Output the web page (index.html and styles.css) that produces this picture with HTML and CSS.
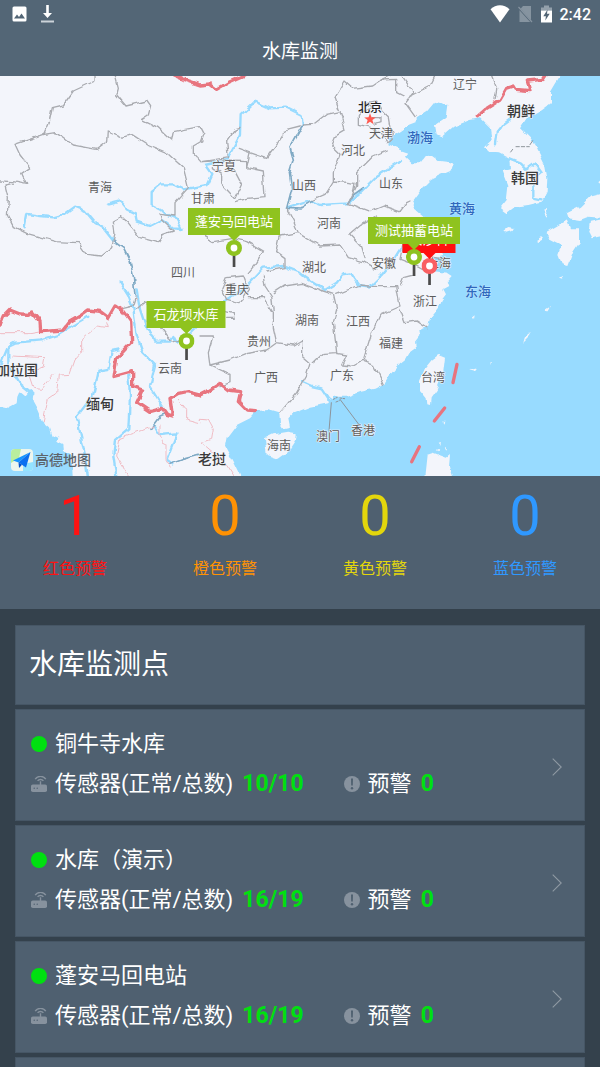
FILE: index.html
```html
<!DOCTYPE html>
<html lang="zh-CN">
<head>
    <meta charset="UTF-8">
    <meta name="viewport" content="width=device-width, initial-scale=1.0">
    <title>水库监测</title>
    <link rel="stylesheet" href="styles.css">
</head>
<body>
    <!-- shared icons -->
    <svg class="icon-defs" width="0" height="0" aria-hidden="true">
        <symbol id="icon-sensor" viewBox="0 0 16 16">
            <rect x="0" y="8.5" width="16" height="7.5" rx="1.8" fill="currentColor"/>
            <path d="M9.5 9V5.2M6.6 4.9a3.6 3.6 0 0 1 5.8 0M4.2 3.2a6.4 6.4 0 0 1 10.6 0" fill="none" stroke="currentColor" stroke-width="1.4"/>
            <circle cx="3.2" cy="12.2" r="0.7" fill="#4f6070"/>
            <circle cx="6.2" cy="12.2" r="0.7" fill="#4f6070"/>
        </symbol>
        <symbol id="icon-warn" viewBox="0 0 16 16">
            <circle cx="8" cy="8" r="8" fill="currentColor"/>
            <path d="M7 2.5h2L8.8 9.6H7.2z" fill="#4f6070"/>
            <circle cx="8" cy="12.2" r="1.2" fill="#4f6070"/>
        </symbol>
        <symbol id="icon-arrow" viewBox="0 0 10 18">
            <path d="M0.7 0.7 9.2 9 0.7 17.3" fill="none" stroke="currentColor" stroke-width="1.1"/>
        </symbol>
        <symbol id="icon-pin" viewBox="0 0 16 28">
            <rect x="6.7" y="15" width="2.7" height="12" fill="#4a4a4a"/>
            <circle cx="8" cy="8" r="8" fill="currentColor"/>
            <circle cx="8" cy="8" r="3.4" fill="#fff"/>
        </symbol>
    </svg>

    <div class="page">
        <div class="status-bar">
            <div class="status-left">
                <svg width="15" height="16" viewBox="0 0 15 16"><rect x="0.5" y="0.5" width="14" height="15" rx="1.5" fill="#fff"/><path d="M2 12.5 5 8.5 7 11 9.5 7.5 13 12.5z" fill="#536676"/></svg>
                <svg width="13" height="18" viewBox="0 0 13 18"><path d="M5.2 0h2.6v8H11l-4.5 5L2 8h3.2z" fill="#fff"/><path d="M0 15.5h13v2H0z" fill="#ccd3d9"/></svg>
            </div>
            <div class="status-right">
                <svg width="20" height="18" viewBox="0 0 20 18"><path d="M0.5 4.3C6-1 14-1 19.5 4.3L10 17.5z" fill="#fff"/></svg>
                <svg width="15" height="18" viewBox="0 0 15 18"><path d="M5 1h8v14.2L2.6 3.8zM1.5 5.2 12.2 17H1.5z" fill="#8694a0"/><path d="M0.5 2 14 17" stroke="#8694a0" stroke-width="1.2"/></svg>
                <svg width="11" height="18" viewBox="0 0 11 18"><path d="M3 0.5h5v2h3v3H0v-3h3z" fill="#93a0ab"/><path d="M0 5.5h11V17.5H0z" fill="#fff"/><path d="M6.6 4.5 2.3 11.3h2.6l-.6 4.3 4.4-6.8H6z" fill="#536676"/></svg>
                <span class="clock">2:42</span>
            </div>
        </div>

        <header class="header">
            <h1>水库监测</h1>
        </header>

        <section class="map" aria-label="地图">
            <svg class="map-canvas" viewBox="0 0 600 400" preserveAspectRatio="xMidYMid slice">
                <defs>
                    <filter id="rough" filterUnits="userSpaceOnUse" x="-20" y="-20" width="1840" height="1240">
                        <feTurbulence type="fractalNoise" baseFrequency="0.045" numOctaves="1" seed="4"/>
                        <feDisplacementMap in="SourceGraphic" scale="18" xChannelSelector="R" yChannelSelector="G"/>
                    </filter>
                </defs>

                <!-- geography is drawn at three units per pixel -->
                <g transform="scale(0.33333)">
                    <g filter="url(#rough)">
                        <!-- sea -->
                        <g class="sea">
                            <path d="M1690-20 1650 47 1650 82 1615 107 1580 127 1560 157 1590 187 1610 217 1635 267 1642 307 1640 347 1625 377 1585 387 1545 392 1520 412 1500 397 1520 372 1525 327 1508 282 1530 277 1528 247 1500 232 1470 230 1452 214 1475 192 1470 157 1440 127 1410 132 1360 152 1325 182 1310 175 1305 147 1340 122 1345 87 1305 77 1280 107 1250 127 1250 137 1225 147 1200 165 1165 187 1162 205 1200 222 1225 230 1215 242 1235 262 1260 262 1275 242 1295 237 1320 255 1362 260 1355 282 1320 297 1290 312 1275 327 1260 342 1238 372 1245 387 1240 397 1270 422 1290 467 1330 540 1300 548 1315 560 1310 574 1270 582 1340 590 1355 600 1340 617 1348 630 1330 640 1338 655 1325 672 1318 690 1305 707 1290 725 1285 752 1255 762 1258 780 1245 797 1248 815 1225 832 1215 850 1200 862 1170 897 1155 922 1130 937 1080 947 1040 962 1000 962 985 982 930 992 880 1012 865 1027 870 1052 850 1057 840 1042 838 1012 805 1002 770 1005 750 1027 710 1047 680 1087 675 1112 700 1157 740 1240 1850 1240 1850-20z"/>
                            <path d="M-20 995 0 990 25 995 50 982 52 965 60 947 75 960 88 945 100 957 98 975 110 997 127 1037 150 1057 158 1080 175 1085 172 1098 190 1107 192 1125 215 1137 220 1240-20 1240z"/>
                        </g>
                        <!-- islands -->
                        <g class="land">
                            <path d="M1640 467 1675 447 1700 432 1710 457 1740 457 1740 497 1720 527 1705 567 1685 562 1675 537 1685 507 1665 497 1645 487z"/>
                            <path d="M1700 412 1740 392 1770 362 1820 350 1820 427 1765 422 1740 432 1705 427z"/>
                            <path d="M1770 437 1820 427 1820 477 1775 487 1765 467z"/>
                            <path d="M1510 462 1525 453 1540 456 1535 465 1518 470z"/>
                            <path d="M1632 415 1640 397 1642 407 1637 422z"/>
                            <path d="M1608 492 1625 482 1632 488 1615 498z"/>
                            <path d="M1315 837 1335 845 1330 887 1310 942 1292 967 1290 987 1282 985 1280 967 1260 942 1260 912 1275 877 1295 852z"/>
                            <path d="M1280 1137 1300 1130 1340 1145 1350 1137 1347 1172 1365 1230 1270 1230z"/>
                            <path d="M795 1087 820 1075 865 1067 890 1072 888 1092 865 1127 835 1149 800 1137z"/>
                            <path d="M1570 800 1574 785 1595 768 1590 780z"/>
                            <path d="M1630 705 1650 692 1643 706z"/>
                            <path d="M1418 722 1424 718 1422 730z"/>
                            <path d="M1680 605 1688 600 1690 608z"/>
                            <path d="M1795 322 1802 315 1802 328z"/>
                            <path d="M1408 880 1432 874 1424 884z"/>
                            <path d="M1470 860 1476 858 1474 866z"/>
                            <path d="M1330 1040 1336 1036 1334 1046zM1313 1100 1320 1098 1318 1106zM1310 1122 1318 1118 1316 1126zM1332 1118 1338 1112 1337 1124z"/>
                        </g>

                        <!-- rivers -->
                        <g class="river">
                            <path d="M74 457 82 414 122 420 160 424 195 414 225 392 255 404 285 440 310 457 340 495"/>
                            <path d="M325 382 358 374 380 400 405 412 410 437 450 450 485 432 520 457 545 459 530 427 495 412 485 402 455 387 455 345 480 325 520 325 550 340 580 335 620 327 635 295 615 267 680 252 700 217 720 177 722 117 765 77 810 97 860 95 905 117 908 147"/>
                            <path d="M860 397 930 375 960 387 1045 382 1090 340 1130 300 1200 255"/>
                            <path d="M0 870 25 810 45 800 125 793 175 777 215 752 265 722"/>
                            <path d="M25 810 25 865 60 925 100 957" />
                            <path d="M362 620 385 657 400 697 410 777 430 832 465 867 450 932 490 997"/>
                            <path d="M410 640 420 700 440 760 460 780 465 797 510 797 520 780 530 800 560 780 600 740 680 670 730 640 770 597 790 575 850 570 900 590 920 607 975 642 1010 620 1030 595 1050 592 1075 627 1110 632 1145 597 1175 560 1200 520"/>
                            <path d="M357 820 335 825 325 882 295 887 280 957 230 1022 245 1092 255 1140 265 1210"/>
                            <path d="M385 900 390 957 385 1057 345 1092 340 1140 350 1210"/>
                            <path d="M460 1047 480 1077 530 1072 500 1150 520 1165"/>
                            <path d="M905 917 935 930 965 937 985 967 1000 977"/>
                            <path d="M1485 202 1490 170 1510 145 1530 130"/>
                            <path d="M1528 247 1560 260 1580 280 1605 262 1625 290 1600 310 1600 365 1625 370"/>
                        </g>
                        <g class="river-border">
                            <path d="M340 495 370 517 390 557 400 600 405 660"/>
                            <path d="M908 147 870 215 880 250 868 290 875 340 860 397 900 399 935 377"/>
                            <path d="M1045 382 1060 357 1090 335"/>
                            <path d="M450 1060 480 1020 500 1012M510 1165 550 1150 600 1137"/>
                        </g>

                        <!-- province borders -->
                        <g class="province">
                            <path d="M285-20 285 15 220 45 190 87 157 95 148 137 132 175 45 205 60 237 90 275 65 292 80 325 40 317 0 315"/>
                            <path d="M132 175 165 170 190 185 220 207 290 220 320 197 322 167 365 185 395 175 445 207 500 230 550 275 565 335 525 380 525 420 480 415 485 432 520 465 490 475 475 500 420 485 385 440 365 422 340 435 345 475 335 515 305 540 260 535 235 500 170 497 80 472 40 452 22 417 25 367 15 327 40 322"/>
                            <path d="M340-20 355 37 350 57 378 90 440 75 452 92 445 117 425 130 475 155 515 192 520 167 600 152 612 175 605 195 580 210 580 230 605 257 640 255"/>
                            <path d="M605 257 685 245 680 197 705 162 720 157M715 217 750 230 800 247 830 207 860 160 900 150"/>
                            <path d="M750 230 740 275 790 285 795 362 740 367 705 377M685 255 740 257 740 277M640 275 665 292 665 325 705 367 725 325 705 287 670 252"/>
                            <path d="M908 147 940 145 980 115 1020 107 1005 65 1035 15 1060 37 1115 30 1145 10 1190 -10"/>
                            <path d="M1020 107 1035 160 1010 175 995 210 1020 235 1000 290 1000 315 975 355 930 375M1000 315 1065 322 1060 350"/>
                            <path d="M1075 122 1085 105 1120 95 1100 80 1130 75 1145 105 1165 125 1170 155 1180 187 1160 197 1140 170 1115 155 1075 145zM1120 125 1140 125 1140 140 1125 145"/>
                            <path d="M1162 222 1120 240 1070 290 1070 330 1045 382 1110 407 1150 390 1200 407M1140 12 1190 10 1190 50 1210 60M1200-10 1240 50 1215 80 1245 122M1230 60 1290 30 1310-10M1470-10 1490 40 1485 70"/>
                            <path d="M860 397 880 435 895 470 960 510 1020 507 1045 545 1090 557 1130 580M1200 407 1220 380 1230 375M1130 420 1100 437 1085 445 1050 475 1085 512 1095 545"/>
                            <path d="M895 470 840 480 830 527 855 545 855 575 800 585M600 472 640 497 700 487 740 497 790 527 770 560 745 590"/>
                            <path d="M410 660 400 690 370 697M410 700 430 680 450 690 480 750 520 800 560 790M600 780 640 780 625 830 630 867 690 895 690 920 660 932"/>
                            <path d="M630 867 690 852 740 832 800 822 830 800M665 640 680 605 730 600 745 640 720 680 680 670zM745 665 790 665 815 705M790 600 795 630 815 660 820 705 820 755 830 800 880 807 905 792 905 840 930 862 920 897 890 950 840 1010"/>
                            <path d="M665 700 700 710 700 727 680 727M820 650 850 630 905 622 960 642 1000 655 1010 700 1000 740 1010 830 970 832 940 860"/>
                            <path d="M1010 655 1080 627 1130 632 1190 632 1200 690 1140 717 1115 770 1090 852 1060 870 1025 867 1040 837 1010 832M1090 857 1125 870 1150 925M1200 700 1215 740 1250 735 1280 755M1200 630 1210 605 1240 597"/>
                            <path d="M1210 500 1200 550 1240 565 1270 582M1285 540 1330 550 1345 565"/>
                        </g>

                        <!-- borders of neighbouring countries -->
                        <g class="neighbour">
                            <path d="M0 770 90 770 130 763M35 840 135 845 130 872 85 892 100 937 125 940 160 897M320 740 325 755 290 750 245 787 245 830 225 852 210 895 175 897 170 950 145 967 135 1012 130 1037"/>
                            <path d="M460 1050 360 1087 350 1140 385 1200M480 1050 480 1080 495 1110 495 1150 510 1175M535 970 560 1000 560 1030 600 1040M600 1030 625 1032 640 1060 635 1090 605 1100 640 1130 680 1165 710 1210"/>
                        </g>

                        <!-- national border -->
                        <g class="national">
                            <path d="M-10 755 0 747 10 722 30 702 60 714 85 715 97 710 120 737 122 767 190 762 210 737 240 720 265 702 300 706 325 725 345 690 370 707 392 737 395 800 350 847 342 902 398 887 398 932 428 942 410 980 450 1007 487 997 500 1015 517 1020 510 967 535 952 560 947 600 957 630 942 660 922 685 942 722 947 715 977 740 1002 770 1004"/>
                            <path d="M520-3 550 10 600 27 630 24 650 40 690 17 740-5"/>
                            <path d="M1432 122 1460 97 1500 72 1520 37 1542 30 1548 40 1590 44 1582 15 1630 10 1640-5"/>
                        </g>
                    </g>

                    <path class="national" d="M1371 865 1359 920M1334 996 1303 1035M1258 1112 1235 1157"/>
                    <path class="leader" d="M994 980 987 1065M1020 970 1080 1050M1548 212h10m6 0h10m6 0h8M1532 228l6-8M1590 206l8-12"/>
                    <path class="leader" d="M1000 970l12-6m8 2l14 2m-26 10l10-4" stroke-dasharray="6 4"/>
                </g>

                <g class="place">
                    <text x="100" y="116">青海</text>
                    <text x="203" y="127">甘肃</text>
                    <text x="224" y="95">宁夏</text>
                    <text x="183" y="201">四川</text>
                    <text x="381" y="62">天津</text>
                    <text x="353" y="79">河北</text>
                    <text x="304" y="114">山西</text>
                    <text x="391" y="112">山东</text>
                    <text x="329" y="152">河南</text>
                    <text x="314" y="196">湖北</text>
                    <text x="384" y="192">安徽</text>
                    <text x="439" y="192">上海</text>
                    <text x="237" y="218">重庆</text>
                    <text x="307" y="249">湖南</text>
                    <text x="358" y="250">江西</text>
                    <text x="425" y="230">浙江</text>
                    <text x="391" y="272">福建</text>
                    <text x="259" y="270">贵州</text>
                    <text x="266" y="306">广西</text>
                    <text x="342" y="304">广东</text>
                    <text x="170" y="297">云南</text>
                    <text x="433" y="306">台湾</text>
                    <text x="328" y="365">澳门</text>
                    <text x="363" y="359">香港</text>
                    <text x="279" y="374">海南</text>
                    <text x="465" y="13">辽宁</text>
                    <text class="capital" x="370" y="36">北京</text>
                </g>
                <g class="place country">
                    <text x="521" y="40">朝鲜</text>
                    <text x="525" y="107">韩国</text>
                    <text x="100" y="333">缅甸</text>
                    <text x="212" y="388">老挝</text>
                    <text x="10" y="299">孟加拉国</text>
                </g>
                <g class="place ocean">
                    <text x="420" y="66">渤海</text>
                    <text x="462" y="137">黄海</text>
                    <text x="478" y="220">东海</text>
                </g>
                <path d="M370 37.2l1.5 4.1 4.3.1-3.4 2.7 1.2 4.2-3.6-2.5-3.6 2.5 1.2-4.2-3.4-2.7 4.3-.1z" fill="#ff5a50"/>
            </svg>

            <button class="marker marker-pengan" type="button">
                <span class="marker-label">蓬安马回电站</span>
                <svg class="marker-pin" width="16" height="28"><use href="#icon-pin"/></svg>
            </button>
            <button class="marker marker-shilong" type="button">
                <span class="marker-label">石龙坝水库</span>
                <svg class="marker-pin" width="16" height="28"><use href="#icon-pin"/></svg>
            </button>
            <button class="marker marker-red" type="button">
                <span class="marker-label">长沙科</span>
                <svg class="marker-pin" width="16" height="28"><use href="#icon-pin"/></svg>
            </button>
            <button class="marker marker-test" type="button">
                <span class="marker-label">测试抽蓄电站</span>
                <svg class="marker-pin" width="16" height="28"><use href="#icon-pin"/></svg>
            </button>

            <div class="map-logo">
                <svg width="22" height="22" viewBox="0 0 22 22">
                    <rect width="22" height="22" rx="4" fill="#eef6ee"/>
                    <path d="M4 0h6L8 9 0 14V4a4 4 0 0 1 4-4z" fill="#b9ee9e"/>
                    <path d="M12 15l10-2v5a4 4 0 0 1-4 4h-6z" fill="#93e3ff"/>
                    <path d="M19.5 3 2 11.5l5.5 2z" fill="#1795ff"/>
                    <path d="M19.5 3 7.5 13.5 15 18.5z" fill="#0a6ff0"/>
                    <path d="M7.5 13.5 8 19l3-3.2z" fill="#0753c9"/>
                </svg>
                <span>高德地图</span>
            </div>
        </section>

        <section class="alerts">
            <div class="alert alert-red">
                <strong>1</strong>
                <span>红色预警</span>
            </div>
            <div class="alert alert-orange">
                <strong>0</strong>
                <span>橙色预警</span>
            </div>
            <div class="alert alert-yellow">
                <strong>0</strong>
                <span>黄色预警</span>
            </div>
            <div class="alert alert-blue">
                <strong>0</strong>
                <span>蓝色预警</span>
            </div>
        </section>

        <main class="stations">
            <h2 class="stations-title">水库监测点</h2>

            <a class="station" href="#tongniusi">
                <div class="station-info">
                    <div class="station-line"><i class="dot"></i>铜牛寺水库</div>
                    <div class="station-line">
                        <svg class="icon" width="16" height="16"><use href="#icon-sensor"/></svg>传感器(正常/总数)<b>10/10</b>
                        <svg class="icon icon-gap" width="16" height="16"><use href="#icon-warn"/></svg>预警<b>0</b>
                    </div>
                </div>
                <svg class="arrow" width="10" height="18"><use href="#icon-arrow"/></svg>
            </a>

            <a class="station" href="#yanshi">
                <div class="station-info">
                    <div class="station-line"><i class="dot"></i>水库（演示）</div>
                    <div class="station-line">
                        <svg class="icon" width="16" height="16"><use href="#icon-sensor"/></svg>传感器(正常/总数)<b>16/19</b>
                        <svg class="icon icon-gap" width="16" height="16"><use href="#icon-warn"/></svg>预警<b>0</b>
                    </div>
                </div>
                <svg class="arrow" width="10" height="18"><use href="#icon-arrow"/></svg>
            </a>

            <a class="station" href="#pengan">
                <div class="station-info">
                    <div class="station-line"><i class="dot"></i>蓬安马回电站</div>
                    <div class="station-line">
                        <svg class="icon" width="16" height="16"><use href="#icon-sensor"/></svg>传感器(正常/总数)<b>16/19</b>
                        <svg class="icon icon-gap" width="16" height="16"><use href="#icon-warn"/></svg>预警<b>0</b>
                    </div>
                </div>
                <svg class="arrow" width="10" height="18"><use href="#icon-arrow"/></svg>
            </a>

            <div class="station station-next"></div>
        </main>
    </div>
</body>
</html>
```
FILE: styles.css
```css
* {
    margin: 0;
    padding: 0;
    box-sizing: border-box;
}

body {
    font-family: Roboto, "Noto Sans CJK SC", sans-serif;
    background: #34414c;
    color: #fff;
}

.icon-defs {
    position: absolute;
}

.page {
    height: 100vh;
    overflow-y: auto;
    scrollbar-width: none;
}

/* top bar */
.status-bar {
    display: flex;
    justify-content: space-between;
    align-items: center;
    height: 28px;
    padding: 0 9px 0 12px;
    background: #536676;
}

.status-left,
.status-right {
    display: flex;
    align-items: center;
    gap: 8px;
}

.status-left {
    gap: 14px;
}

.clock {
    font-size: 16px;
    font-weight: 500;
}

.header {
    height: 48px;
    background: #536676;
    text-align: center;
}

.header h1 {
    font-size: 19px;
    font-weight: 400;
    line-height: 48px;
}

/* map */
.map {
    position: relative;
    height: 400px;
    overflow: hidden;
    background: #f3f5fb;
}

.map-canvas {
    display: block;
    width: 100%;
    height: 100%;
}

.sea {
    fill: #98dbff;
}

.land {
    fill: #f3f5fb;
}

.river,
.river-border,
.province,
.neighbour,
.national,
.leader {
    fill: none;
    stroke-linejoin: round;
    stroke-linecap: round;
}

.river {
    stroke: #98dbff;
    stroke-width: 7px;
}

.river-border {
    stroke: #7fa9c4;
    stroke-width: 5px;
}

.province {
    stroke: #a9abb0;
    stroke-width: 4px;
}

.neighbour {
    stroke: #f0bcc4;
    stroke-width: 3px;
}

.national {
    stroke: #e8747f;
    stroke-width: 10px;
}

.leader {
    stroke: #8d949b;
    stroke-width: 3px;
}

.place text {
    fill: #5c5c5c;
    font-size: 12px;
    text-anchor: middle;
    stroke: #f3f5fb;
    stroke-width: 1px;
    paint-order: stroke;
}

.place .capital {
    fill: #222;
    font-weight: 500;
}

.country text {
    fill: #3a3a3a;
    font-size: 14px;
    font-weight: 500;
}

.ocean text {
    fill: #2f68bd;
    font-size: 13px;
    font-weight: 500;
    stroke: #b9e6ff;
}

.marker {
    position: absolute;
    display: flex;
    flex-direction: column;
    align-items: center;
    border: 0;
    background: none;
    color: #8fc31f;
    font-family: inherit;
    transform: translateX(-50%);
    cursor: pointer;
}

.marker-label {
    position: relative;
    padding: 0 7px;
    background: #8fc31f;
    color: #fff;
    font-size: 13px;
    line-height: 27px;
    white-space: nowrap;
}

.marker-label::after {
    content: "";
    position: absolute;
    top: 100%;
    left: 50%;
    margin-left: -6px;
    border: 6px solid transparent;
    border-top-color: #8fc31f;
    border-bottom: 0;
}

.marker-pin {
    margin-top: 5px;
}

.marker-pengan {
    left: 39%;
    top: 132px;
}

.marker-shilong {
    left: 31%;
    top: 225px;
}

.marker-test {
    left: 69%;
    top: 141px;
}

.marker-red {
    left: 71.5%;
    top: 150px;
    color: #f95f62;
}

.marker-red .marker-label {
    background: #ff1010;
}

.marker-red .marker-label::after {
    border-top-color: #ff1010;
}

.map-logo {
    position: absolute;
    left: 11px;
    bottom: 5px;
    display: flex;
    align-items: center;
    gap: 2px;
    color: #5d646b;
    font-size: 14px;
    font-weight: 500;
    line-height: 20px;
}

/* alert counters */
.alerts {
    display: grid;
    grid-template-columns: repeat(4, 1fr);
    padding: 8px 0 28px;
    background: #4f6070;
}

.alert {
    display: flex;
    flex-direction: column;
    align-items: center;
    gap: 9px;
}

.alert strong {
    font-size: 56px;
    font-weight: 400;
    line-height: 64px;
}

.alert span {
    font-size: 16px;
    line-height: 24px;
}

.alert-red {
    color: #ff1212;
}

.alert-orange {
    color: #ff9204;
}

.alert-yellow {
    color: #e3d60c;
}

.alert-blue {
    color: #2f98ff;
}

/* station list */
.stations {
    display: flex;
    flex-direction: column;
    gap: 4px;
    padding: 16px 15px;
}

.stations-title,
.station {
    border: 1px solid #465665;
    background: #4f6070;
}

.stations-title {
    padding: 0 13px;
    font-size: 28px;
    font-weight: 400;
    line-height: 78px;
}

.station {
    display: flex;
    align-items: center;
    justify-content: space-between;
    min-height: 112px;
    padding: 14px 22px 16px 15px;
    color: #fff;
    text-decoration: none;
}

.station-line {
    display: flex;
    align-items: center;
    font-size: 22px;
    line-height: 40px;
}

.station-line b {
    margin-left: 9px;
    color: #00e010;
    font-size: 23px;
    font-weight: 700;
}

.dot {
    width: 16px;
    height: 16px;
    margin-right: 8px;
    border-radius: 50%;
    background: #00e010;
}

.icon {
    margin-right: 8px;
    color: #87929e;
}

.icon-gap {
    margin-left: 40px;
}

.arrow {
    margin-top: 6px;
    color: #8f99a3;
}
```
